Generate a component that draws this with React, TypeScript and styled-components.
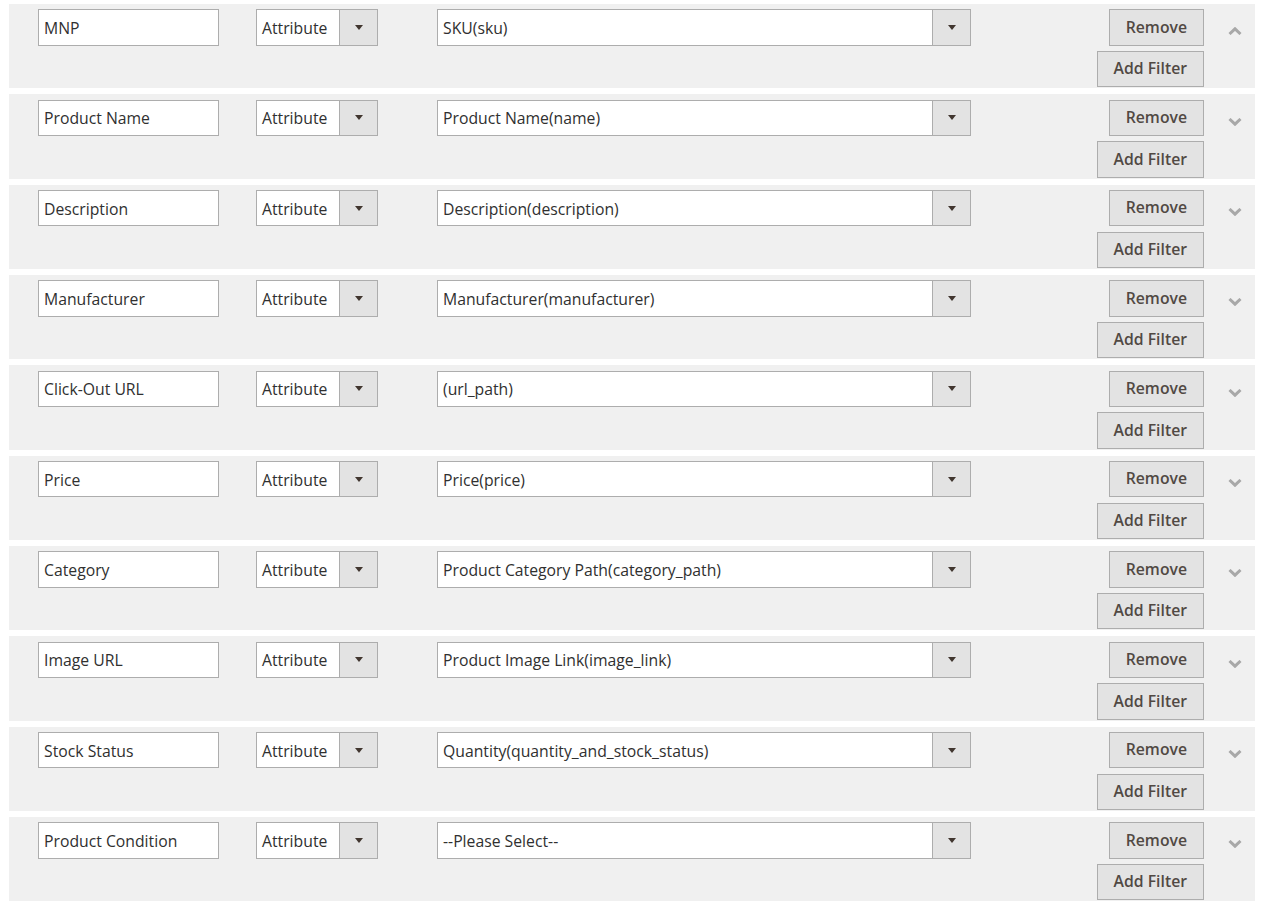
import React from "react";
import styled, { createGlobalStyle } from "styled-components";

const GlobalStyle = createGlobalStyle`
  html, body { margin: 0; padding: 0; background: #ffffff; }
  body { font-family: "Open Sans", "Liberation Sans", sans-serif; }
  * { box-sizing: border-box; }
`;

const Page = styled.div`
  padding: 4px 0 0 9px;
  width: 1255px;
`;

const FieldRow = styled.div`
  display: flex;
  align-items: flex-start;
  height: 84.33px;
  margin-bottom: 6px;
  padding: 5.3px 0 0 29px;
  background: #f0f0f0;
`;

const TextInput = styled.div`
  width: 181px;
  height: 36.4px;
  border: 1px solid #adadad;
  background: #ffffff;
  display: flex;
  align-items: center;
  padding: 1px 0 0 5px;
  font-size: 15.75px;
  color: #303030;
  white-space: nowrap;
`;

const SelectBox = styled.div<{ $width: number; $gap: number }>`
  width: ${(p) => p.$width}px;
  margin-left: ${(p) => p.$gap}px;
  height: 36.4px;
  border: 1px solid #adadad;
  background: #ffffff;
  display: flex;
  align-items: stretch;
  font-size: 15.75px;
  color: #303030;
`;

const SelectLabel = styled.div`
  flex: 1;
  display: flex;
  align-items: center;
  padding: 1px 0 0 5px;
  white-space: nowrap;
  overflow: hidden;
`;

const SelectArrow = styled.div`
  width: 38px;
  border-left: 1px solid #adadad;
  background: #e3e3e3;
  display: flex;
  align-items: center;
  justify-content: center;
  &::after {
    content: "";
    width: 0;
    height: 0;
    border-left: 4px solid transparent;
    border-right: 4px solid transparent;
    border-top: 5px solid #41362f;
  }
`;

const Spacer = styled.div`
  flex: 1;
`;

const ButtonStack = styled.div`
  display: flex;
  flex-direction: column;
  align-items: flex-end;
  gap: 5.3px;
`;

const ActionButton = styled.button`
  height: 36.4px;
  padding: 0 16px;
  border: 1px solid #adadad;
  background: #e3e3e3;
  color: #514943;
  font-family: "Open Sans", "Liberation Sans", sans-serif;
  font-size: 15.75px;
  font-weight: 600;
  line-height: 1;
  cursor: pointer;
`;

const Toggle = styled.div`
  width: 51px;
  padding: 18px 0 0 24px;
  display: flex;
`;

const Chevron = ({ up }: { up: boolean }) => (
  <svg width="14" height="8" viewBox="0 0 14 8">
    <polyline
      points={up ? "1.5,7 7,1.8 12.5,7" : "1.5,1 7,6.2 12.5,1"}
      fill="none"
      stroke="#a8a8a8"
      strokeWidth="3"
    />
  </svg>
);

const rows = [
  ["MNP", "SKU(sku)"],
  ["Product Name", "Product Name(name)"],
  ["Description", "Description(description)"],
  ["Manufacturer", "Manufacturer(manufacturer)"],
  ["Click-Out URL", "(url_path)"],
  ["Price", "Price(price)"],
  ["Category", "Product Category Path(category_path)"],
  ["Image URL", "Product Image Link(image_link)"],
  ["Stock Status", "Quantity(quantity_and_stock_status)"],
  ["Product Condition", "--Please Select--"],
];

export default function App() {
  return (
    <>
      <GlobalStyle />
      <Page>
        {rows.map(([name, mapping], i) => (
          <FieldRow key={name}>
            <TextInput>{name}</TextInput>
            <SelectBox $width={122} $gap={37}>
              <SelectLabel>Attribute</SelectLabel>
              <SelectArrow />
            </SelectBox>
            <SelectBox $width={534} $gap={59}>
              <SelectLabel>{mapping}</SelectLabel>
              <SelectArrow />
            </SelectBox>
            <Spacer />
            <ButtonStack>
              <ActionButton>Remove</ActionButton>
              <ActionButton>Add Filter</ActionButton>
            </ButtonStack>
            <Toggle>
              <Chevron up={i === 0} />
            </Toggle>
          </FieldRow>
        ))}
      </Page>
    </>
  );
}
